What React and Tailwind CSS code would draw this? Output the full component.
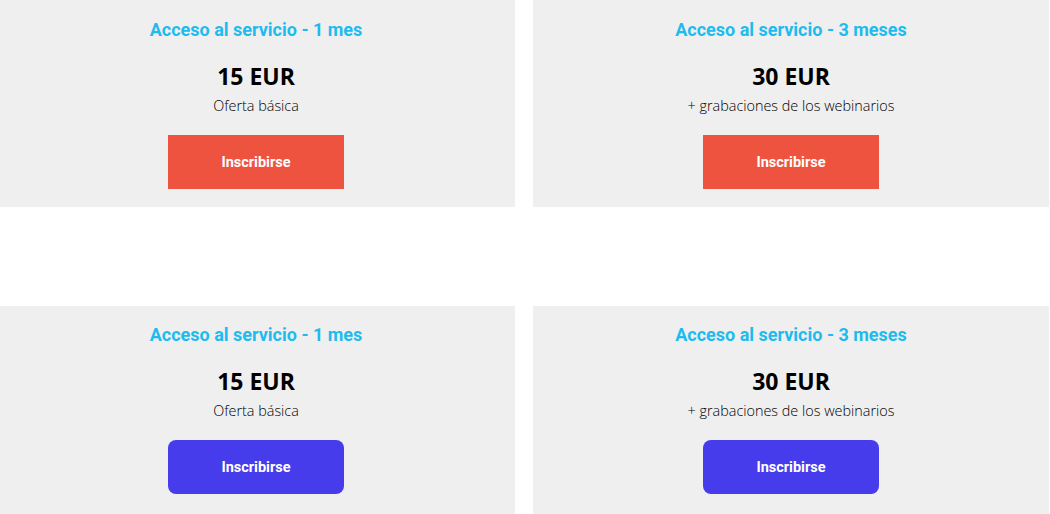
import React from "react";

const plans = [
  { title: "Acceso al servicio - 1 mes", price: "15 EUR", sub: "Oferta básica" },
  { title: "Acceso al servicio - 3 meses", price: "30 EUR", sub: "+ grabaciones de los webinarios" },
];

function Card({ p, variant, first }) {
  const pad = variant === "red" ? "pt-[19px] pb-[18px]" : "pt-[17px] pb-[20px]";
  return (
    <div className={`flex h-[208px] flex-col items-center bg-[#efefef] ${pad} ${first ? "pr-[3px]" : ""}`}>
      <div className="h-[24px] font-['Roboto',sans-serif] text-[18px] font-bold leading-[24px] text-[#1ebbee]">
        {p.title}
      </div>
      <div className="mt-[19px] h-[30px] font-['Open_Sans',sans-serif] text-[23px] font-bold leading-[30px] text-black">
        {p.price}
      </div>
      <div className="mt-[5px] h-[20px] font-['Open_Sans',sans-serif] text-[14.4px] font-light leading-[20px] text-black">
        {p.sub}
      </div>
      {variant === "red" ? (
        <button className="mt-[19px] h-[54px] w-[176px] bg-[#ee5340] pt-[2px] font-['Roboto',sans-serif] text-[14.5px] font-bold text-white">
          Inscribirse
        </button>
      ) : (
        <button className="mt-[19px] h-[54px] w-[176px] rounded-[8px] bg-[#463ceb] pt-[2px] font-['Roboto',sans-serif] text-[14.5px] font-bold text-white">
          Inscribirse
        </button>
      )}
    </div>
  );
}

export default function App() {
  return (
    <div className="h-[514px] w-[1050px] overflow-hidden bg-white">
      <div className="-mt-px flex w-[1049px] flex-col gap-[99px]">
        <div className="grid grid-cols-[515px_516px] gap-[18px]">
          {plans.map((p, i) => (
            <Card key={i} p={p} variant="red" first={i === 0} />
          ))}
        </div>
        <div className="grid grid-cols-[515px_516px] gap-[18px]">
          {plans.map((p, i) => (
            <Card key={i} p={p} variant="purple" first={i === 0} />
          ))}
        </div>
      </div>
    </div>
  );
}
